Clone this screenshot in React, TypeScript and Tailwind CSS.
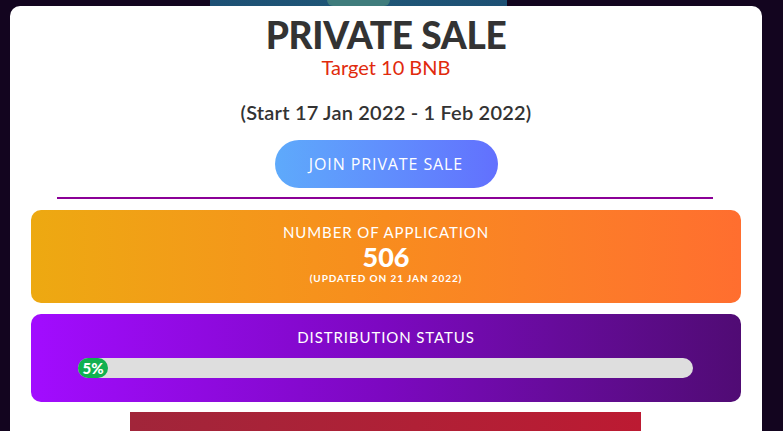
export default function App() {
  const progress = 5;

  return (
    <main className="min-h-screen bg-[#13051f] font-['Lato','Open_Sans',sans-serif] overflow-hidden">
      {/* bottom edge of the banner image above the card */}
      <div className="flex h-[6px] pl-[210px]">
        <div className="w-[297px] h-full bg-gradient-to-r from-[#1d5074] via-[#1f5677] to-[#1d5074] flex justify-center">
          <div className="w-[63px] h-full bg-[#3f7c7c] rounded-b-full" />
        </div>
      </div>

      <div className="ml-[10px] w-[752px] bg-white rounded-t-[10px] pt-[9px] pb-10">
        <h1 className="text-center text-[37px] leading-[40px] font-black text-[#333333] tracking-[-0.3px]">
          PRIVATE SALE
        </h1>
        <p className="text-center text-[20px] leading-[24px] text-[#e12a0c]">
          Target 10 BNB
        </p>
        <p className="text-center text-[20px] leading-[24px] text-[#333333] font-semibold tracking-[0.2px] mt-[21px]">
          (Start 17 Jan 2022 - 1 Feb 2022)
        </p>

        <div className="flex justify-center mt-[16px]">
          <button className="w-[223px] h-[48px] rounded-full bg-gradient-to-r from-[#5eaafb] to-[#6270fe] text-white text-[16px] tracking-[0.9px] font-['Open_Sans',sans-serif]">
            JOIN PRIVATE SALE
          </button>
        </div>

        <div className="ml-[47px] mr-[49px] mt-[9px] h-[2px] bg-[#8b0097]" />

        <section className="mx-[21px] mt-[11px] h-[93px] rounded-[10px] bg-gradient-to-r from-[#eda911] via-[#f88c1e] to-[#ff6e2f] text-white flex flex-col items-center pt-[13px]">
          <h3 className="text-[15px] leading-[18px] tracking-[0.9px]">NUMBER OF APPLICATION</h3>
          <div className="text-[27px] leading-[28px] font-black mt-[2px]">506</div>
          <div className="text-[10px] leading-[12px] tracking-[0.9px] font-bold mt-[1px]">
            (UPDATED ON 21 JAN 2022)
          </div>
        </section>

        <section className="mx-[21px] mt-[11px] h-[88px] rounded-[10px] bg-gradient-to-r from-[#a20cff] via-[#7c08c0] to-[#500b74] text-white flex flex-col pt-[14px]">
          <h3 className="text-center text-[15px] leading-[18px] tracking-[0.9px]">DISTRIBUTION STATUS</h3>
          <div className="ml-[47px] mr-[48px] mt-[12px] h-[20px] rounded-full bg-[#dedede] flex">
            <div
              className="h-full rounded-full bg-[#11b050] flex items-center justify-center text-[15px] font-black"
              style={{ width: `${Math.max(progress, 5) * 0.975}%` }}
            >
              {progress}%
            </div>
          </div>
        </section>

        <div className="ml-[120px] w-[511px] h-[40px] mt-[10px] bg-gradient-to-r from-[#a1253a] to-[#bc1a32]" />
      </div>
    </main>
  );
}
